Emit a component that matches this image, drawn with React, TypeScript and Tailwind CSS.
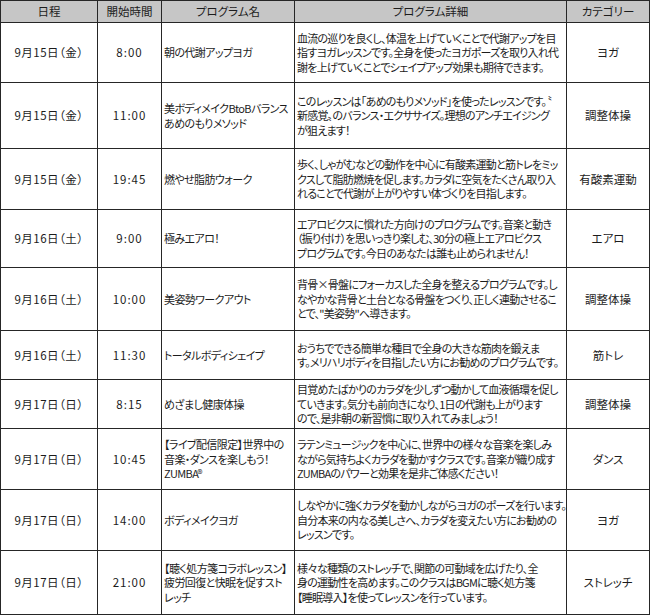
import React from 'react'

type Row = {
  date: string
  time: string
  name: string[]
  detail: string[]
  category: string
  h: string
}

const rows: Row[] = [
  {
    date: '9月15日（金）',
    time: '8:00',
    name: ['朝の代謝アップヨガ'],
    detail: [
      '血流の巡りを良くし、体温を上げていくことで代謝アップを目',
      '指すヨガレッスンです。全身を使ったヨガポーズを取り入れ代',
      '謝を上げていくことでシェイプアップ効果も期待できます。',
    ],
    category: 'ヨガ',
    h: 'h-[60px]',
  },
  {
    date: '9月15日（金）',
    time: '11:00',
    name: ['美ボディメイクBtoBバランス', 'あめのもりメソッド'],
    detail: [
      'このレッスンは「あめのもりメソッド」を使ったレッスンです。〝',
      '新感覚〟のバランス・エクササイズ。理想のアンチエイジング',
      'が狙えます！',
    ],
    category: '調整体操',
    h: 'h-[66px]',
  },
  {
    date: '9月15日（金）',
    time: '19:45',
    name: ['燃やせ脂肪ウォーク'],
    detail: [
      '歩く、しゃがむなどの動作を中心に有酸素運動と筋トレをミッ',
      'クスして脂肪燃焼を促します。カラダに空気をたくさん取り入',
      'れることで代謝が上がりやすい体づくりを目指します。',
    ],
    category: '有酸素運動',
    h: 'h-[61px]',
  },
  {
    date: '9月16日（土）',
    time: '9:00',
    name: ['極みエアロ！'],
    detail: [
      'エアロビクスに慣れた方向けのプログラムです。音楽と動き',
      '（振り付け）を思いっきり楽しむ、30分の極上エアロビクス',
      'プログラムです。今日のあなたは誰も止められません！',
    ],
    category: 'エアロ',
    h: 'h-[58px]',
  },
  {
    date: '9月16日（土）',
    time: '10:00',
    name: ['美姿勢ワークアウト'],
    detail: [
      '背骨×骨盤にフォーカスした全身を整えるプログラムです。し',
      'なやかな背骨と土台となる骨盤をつくり、正しく連動させるこ',
      'とで、"美姿勢"へ導きます。',
    ],
    category: '調整体操',
    h: 'h-[63px]',
  },
  {
    date: '9月16日（土）',
    time: '11:30',
    name: ['トータルボディシェイプ'],
    detail: [
      'おうちでできる簡単な種目で全身の大きな筋肉を鍛えま',
      'す。メリハリボディを目指したい方にお勧めのプログラムです。',
    ],
    category: '筋トレ',
    h: 'h-[49px]',
  },
  {
    date: '9月17日（日）',
    time: '8:15',
    name: ['めざまし健康体操'],
    detail: [
      '目覚めたばかりのカラダを少しずつ動かして血液循環を促し',
      'ていきます。気分も前向きになり、1日の代謝も上がります',
      'ので、是非朝の新習慣に取り入れてみましょう！',
    ],
    category: '調整体操',
    h: 'h-[49px]',
  },
  {
    date: '9月17日（日）',
    time: '10:45',
    name: ['【ライブ配信限定】世界中の', '音楽・ダンスを楽しもう！', 'ZUMBA®'],
    detail: [
      'ラテンミュージックを中心に、世界中の様々な音楽を楽しみ',
      'ながら気持ちよくカラダを動かすクラスです。音楽が織り成す',
      'ZUMBAのパワーと効果を是非ご体感ください！',
    ],
    category: 'ダンス',
    h: 'h-[61px]',
  },
  {
    date: '9月17日（日）',
    time: '14:00',
    name: ['ボディメイクヨガ'],
    detail: [
      'しなやかに強くカラダを動かしながらヨガのポーズを行います。',
      '自分本来の内なる美しさへ、カラダを変えたい方にお勧めの',
      'レッスンです。',
    ],
    category: 'ヨガ',
    h: 'h-[61px]',
  },
  {
    date: '9月17日（日）',
    time: '21:00',
    name: ['【聴く処方箋コラボレッスン】', '疲労回復と快眠を促すスト', 'レッチ'],
    detail: [
      '様々な種類のストレッチで、関節の可動域を広げたり、全',
      '身の運動性を高めます。このクラスはBGMに聴く処方箋',
      '【睡眠導入】を使ってレッスンを行っています。',
    ],
    category: 'ストレッチ',
    h: 'h-[64px]',
  },
]

const cell = 'border border-[#262626] align-middle'

export default function App() {
  return (
    <div className="w-[650px] bg-white font-['Noto_Sans_CJK_JP','Noto_Sans',sans-serif] text-[11.5px] leading-[14.5px] text-[#1c1c1c] [font-feature-settings:'palt']">
      <table className="w-[649px] table-fixed border-collapse">
        <colgroup>
          <col className="w-[97px]" />
          <col className="w-[64px]" />
          <col className="w-[133px]" />
          <col className="w-[272px]" />
          <col className="w-[83px]" />
        </colgroup>
        <thead>
          <tr className="h-[22px] bg-[#c6c6c6]">
            <th className={`${cell} font-normal`}>日程</th>
            <th className={`${cell} font-normal`}>開始時間</th>
            <th className={`${cell} font-normal`}>プログラム名</th>
            <th className={`${cell} font-normal`}>プログラム詳細</th>
            <th className={`${cell} font-normal`}>カテゴリー</th>
          </tr>
        </thead>
        <tbody>
          {rows.map((r, i) => (
            <tr key={i} className={r.h}>
              <td className={`${cell} text-center tracking-[0.5px]`}>{r.date}</td>
              <td className={`${cell} text-center tracking-[1px]`}>{r.time}</td>
              <td className={`${cell} overflow-hidden whitespace-nowrap px-[2px] text-[11px] tracking-[-0.6px]`}>
                {r.name.map((l, j) => (
                  <div key={j}>{l}</div>
                ))}
              </td>
              <td className={`${cell} overflow-hidden whitespace-nowrap px-[2px] text-[11px] tracking-[-0.75px]`}>
                {r.detail.map((l, j) => (
                  <div key={j}>{l}</div>
                ))}
              </td>
              <td className={`${cell} text-center`}>{r.category}</td>
            </tr>
          ))}
        </tbody>
      </table>
    </div>
  )
}
